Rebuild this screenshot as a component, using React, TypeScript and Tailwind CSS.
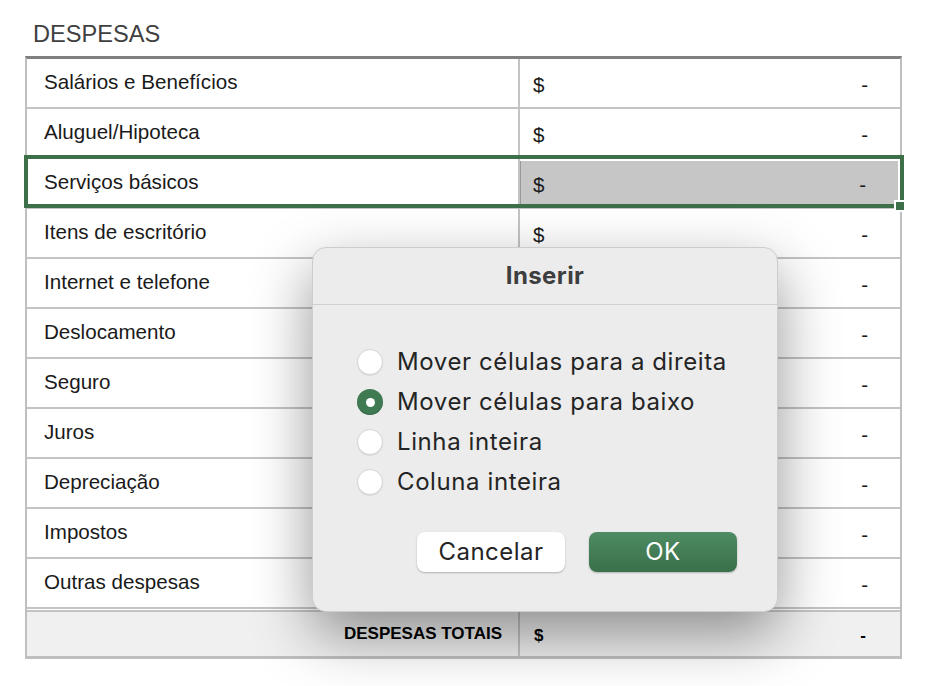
import React from "react";

const rows = [
  "Salários e Benefícios",
  "Aluguel/Hipoteca",
  "Serviços básicos",
  "Itens de escritório",
  "Internet e telefone",
  "Deslocamento",
  "Seguro",
  "Juros",
  "Depreciação",
  "Impostos",
  "Outras despesas",
];

const options = [
  { label: "Mover células para a direita", checked: false },
  { label: "Mover células para baixo", checked: true },
  { label: "Linha inteira", checked: false },
  { label: "Coluna inteira", checked: false },
];

const Radio = ({ checked }: { checked: boolean }) =>
  checked ? (
    <span className="flex h-[26px] w-[26px] shrink-0 items-center justify-center rounded-full bg-[#3f7a52] shadow-[inset_0_-1px_1px_rgba(0,0,0,0.2)]">
      <span className="h-[9px] w-[9px] rounded-full bg-white" />
    </span>
  ) : (
    <span className="h-[26px] w-[26px] shrink-0 rounded-full border border-[#d4d4d4] bg-white shadow-[0_1px_1px_rgba(0,0,0,0.08)]" />
  );

const InsertDialog = () => (
  <div className="absolute left-[312px] top-[247px] flex h-[365px] w-[466px] flex-col rounded-[14px] border border-[#cdcdcd] bg-[#ececec] shadow-[0_22px_60px_rgba(0,0,0,0.42)] font-['Inter',sans-serif]">
    <div className="flex h-[57px] items-center justify-center border-b border-[#d0d0d0] text-[24px] font-bold tracking-[0.4px] text-[#3e3e3e]">
      Inserir
    </div>
    <div className="flex flex-col gap-[14px] pl-[44px] pt-[44px]">
      {options.map((o) => (
        <div key={o.label} className="flex h-[26px] items-center gap-[14px]">
          <Radio checked={o.checked} />
          <span className="whitespace-nowrap text-[24px] tracking-[0.6px] text-[#242424]">
            {o.label}
          </span>
        </div>
      ))}
    </div>
    <div className="mt-[37px] flex justify-end gap-[24px] pr-[40px]">
      <button className="flex h-[40px] w-[148px] items-center justify-center rounded-[8px] bg-white text-[24px] tracking-[0.5px] text-[#242424] shadow-[0_1px_2px_rgba(0,0,0,0.25)]">
        Cancelar
      </button>
      <button className="flex h-[40px] w-[148px] items-center justify-center rounded-[8px] bg-gradient-to-b from-[#4e8b63] to-[#3a704a] text-[24px] tracking-[0.5px] text-white shadow-[0_1px_2px_rgba(0,0,0,0.25)]">
        OK
      </button>
    </div>
  </div>
);

export default function App() {
  return (
    <div className="relative h-[686px] w-[936px] overflow-hidden bg-white font-['Liberation_Sans',Arial,sans-serif]">
      <div className="pl-[33px] pt-[19px] text-[23.6px] leading-[30px] text-[#404040]">
        DESPESAS
      </div>
      <div className="ml-[25px] mt-[7px] w-[877px] border-x-2 border-t-[3px] border-b-[3px] border-x-[#bfbfbf] border-t-[#808080] border-b-[#bfbfbf]">
        {rows.map((label, i) => (
          <div
            key={label}
            className="relative flex h-[50px] border-b-2 border-[#c4c4c4] text-[20.6px] text-[#1a1a1a]"
          >
            <div className="flex w-[493px] items-center border-r-2 border-[#c4c4c4] pl-[17px] pb-[2px]">
              {label}
            </div>
            {i === 2 ? (
              <div className="my-[2px] mr-[2px] flex flex-1 items-center justify-between border-l border-[#999999] bg-[#c6c6c6] pl-[12px] pr-[32px] pt-[4px]">
                <span>$</span>
                <span>-</span>
              </div>
            ) : (
              <div className="flex flex-1 items-center justify-between pl-[13px] pr-[32px] pt-[4px]">
                <span>$</span>
                <span>-</span>
              </div>
            )}
            {i === 2 && (
              <>
                <div className="pointer-events-none absolute -left-[3px] -right-[4px] -top-[4px] -bottom-[1px] border-[4px] border-[#3d7049]" />
                <div className="absolute -bottom-[5px] -right-[6px] h-[12px] w-[12px] border-2 border-white bg-[#3d7049]" />
              </>
            )}
          </div>
        ))}
        <div className="mt-px flex h-[46px] border-t-2 border-[#c4c4c4] bg-[#f0f0f0] text-[17px] font-bold text-black">
          <div className="flex w-[493px] items-center justify-end border-r-2 border-[#c4c4c4] pr-[16px]">
            DESPESAS TOTAIS
          </div>
          <div className="flex flex-1 items-center justify-between pl-[14px] pr-[34px] pt-[4px]">
            <span>$</span>
            <span>-</span>
          </div>
        </div>
      </div>
      <InsertDialog />
    </div>
  );
}
